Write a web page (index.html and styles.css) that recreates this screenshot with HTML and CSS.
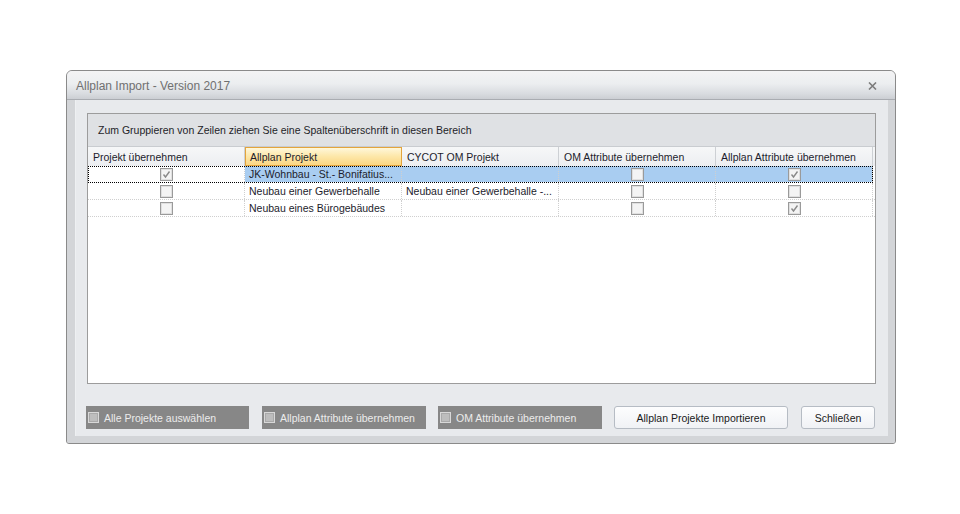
FILE: index.html
```html
<!DOCTYPE html>
<html>
<head>
<meta charset="utf-8">
<link rel="stylesheet" href="styles.css">
</head>
<body>
<div class="page">
  <div class="window">
    <div class="titlebar">
      <span class="title">Allplan Import - Version 2017</span>
      <svg class="close" width="9" height="8" viewBox="0 0 9 8"><path d="M1 0.5 L8 7.5 M8 0.5 L1 7.5" stroke="#7c7c7c" stroke-width="1.6" fill="none"/></svg>
    </div>
    <div class="frame">
      <div class="client">
        <div class="grid">
          <div class="grouppanel">Zum Gruppieren von Zeilen ziehen Sie eine Spaltenüberschrift in diesen Bereich</div>
          <div class="header">
            <div class="hcell">Projekt übernehmen</div>
            <div class="hcell hot">Allplan Projekt</div>
            <div class="hcell">CYCOT OM Projekt</div>
            <div class="hcell">OM Attribute übernehmen</div>
            <div class="hcell">Allplan Attribute übernehmen</div>
          </div>
          <div class="body">
            <div class="row selected">
              <div class="cell center focus"><span class="cb checked"><svg width="11" height="11" viewBox="0 0 11 11"><path d="M2.5 5.5 L4.5 8 L8.5 2.5" stroke="#8a8a8a" stroke-width="1.4" fill="none"/></svg></span></div>
              <div class="cell">JK-Wohnbau - St.- Bonifatius...</div>
              <div class="cell"></div>
              <div class="cell center"><span class="cb"></span></div>
              <div class="cell center"><span class="cb checked"><svg width="11" height="11" viewBox="0 0 11 11"><path d="M2.5 5.5 L4.5 8 L8.5 2.5" stroke="#8a8a8a" stroke-width="1.4" fill="none"/></svg></span></div>
            </div>
            <div class="row">
              <div class="cell center"><span class="cb"></span></div>
              <div class="cell">Neubau einer Gewerbehalle</div>
              <div class="cell">Neubau einer Gewerbehalle -...</div>
              <div class="cell center"><span class="cb"></span></div>
              <div class="cell center"><span class="cb"></span></div>
            </div>
            <div class="row">
              <div class="cell center"><span class="cb"></span></div>
              <div class="cell">Neubau eines Bürogebäudes</div>
              <div class="cell"></div>
              <div class="cell center"><span class="cb"></span></div>
              <div class="cell center"><span class="cb checked"><svg width="11" height="11" viewBox="0 0 11 11"><path d="M2.5 5.5 L4.5 8 L8.5 2.5" stroke="#8a8a8a" stroke-width="1.4" fill="none"/></svg></span></div>
            </div>
          </div>
        </div>
        <div class="bottombar">
          <div class="dark-check w1"><span class="scb"></span>Alle Projekte auswählen</div>
          <div class="dark-check w2"><span class="scb"></span>Allplan Attribute übernehmen</div>
          <div class="dark-check w2"><span class="scb"></span>OM Attribute übernehmen</div>
          <button class="btn w3">Allplan Projekte Importieren</button>
          <button class="btn w4">Schließen</button>
        </div>
      </div>
    </div>
  </div>
</div>
</body>
</html>
```
FILE: styles.css
```css
html, body {
  margin: 0;
  background: #ffffff;
  font-family: "Liberation Sans", Arial, sans-serif;
  font-size: 10.5px;
  color: #1c1c28;
}

.page {
  padding: 70px 0 0 66px;
}

.window {
  width: 830px;
  height: 374px;
  box-sizing: border-box;
  border: 1px solid #8a8a8a;
  border-radius: 6px 6px 3px 3px;
  background: #d6d8db;
  display: flex;
  flex-direction: column;
  overflow: hidden;
}

.titlebar {
  height: 28px;
  flex: none;
  display: flex;
  align-items: center;
  justify-content: space-between;
  padding: 0 18px 0 9px;
  background: linear-gradient(#f3f3f4 0%, #eceef0 45%, #d9dce0 80%, #cbced3 100%);
  border-bottom: 1px solid #a9acb1;
}

.title {
  font-size: 12px;
  color: #707070;
  padding-top: 1px;
}

.close {
  display: block;
  margin-top: 1px;
}

.frame {
  flex: 1;
  display: flex;
  padding: 0 7px 7px 8px;
  background: #d3d5d8;
}

.client {
  flex: 1;
  display: flex;
  flex-direction: column;
  background: #e8eaed;
  padding: 13px 12px 7px 12px;
  box-shadow: inset 1px 0 0 #eef0f2;
}

.grid {
  height: 271px;
  box-sizing: border-box;
  border: 1px solid #9c9c9c;
  background: #ffffff;
  display: flex;
  flex-direction: column;
}

.grouppanel {
  height: 32px;
  flex: none;
  display: flex;
  align-items: center;
  padding-left: 10px;
  background: #dfe1e4;
  color: #1e1e28;
}

.header {
  height: 19px;
  flex: none;
  display: grid;
  grid-template-columns: repeat(5, 157px);
  background: linear-gradient(#f6f7f8, #eceef1);
  border-top: 1px solid #c9ccd0;
}

.hcell {
  display: flex;
  align-items: center;
  padding-left: 5px;
  border-right: 1px solid #cdd0d4;
  white-space: nowrap;
  overflow: hidden;
  color: #1c1c2c;
}

.hcell.hot {
  border: 1px solid #e3a43c;
  padding-left: 4px;
  background: linear-gradient(#fff7da, #fde7a8 50%, #fbd684);
}

.body {
  flex: 1;
  background: #ffffff;
}

.row {
  display: grid;
  grid-template-columns: repeat(5, 157px);
  height: 17px;
  box-sizing: border-box;
  border-bottom: 1px dotted #cfcfcf;
}

.row.selected {
  outline: 1px dotted #000000;
  outline-offset: -1px;
  width: 785px;
}

.row.selected .cell {
  background: #a9cdf1;
}

.row.selected .cell.focus {
  background: #ffffff;
}

.cell {
  display: flex;
  align-items: center;
  padding-left: 4px;
  border-right: 1px dotted #cfcfcf;
  white-space: nowrap;
  overflow: hidden;
  color: #1c1c2c;
}

.cell.center {
  justify-content: center;
  padding-left: 0;
}

.cb {
  width: 13px;
  height: 13px;
  box-sizing: border-box;
  border: 1px solid #9a9a9a;
  box-shadow: inset 0 0 0 1px #e0e0e0;
  background: #f4f4f4;
  display: flex;
  align-items: center;
  justify-content: center;
}

.cb svg {
  display: block;
}

.bottombar {
  margin-top: 22px;
  margin-left: -1px;
  height: 23px;
  display: flex;
  gap: 12px;
}

.dark-check {
  height: 23px;
  box-sizing: border-box;
  background: #878787;
  color: #ececec;
  display: flex;
  align-items: center;
  padding-left: 2px;
}

.w1 { width: 163px; margin-right: 1px; }
.w2 { width: 164px; }
.w3 { width: 174px; margin-right: 1px; }
.w4 { width: 74px; }

.scb {
  width: 11px;
  height: 11px;
  box-sizing: border-box;
  border: 1px solid #d8d8d8;
  box-shadow: inset 0 0 0 1px #a9a9a9;
  background: #bdbdbd;
  margin-right: 5px;
}

.btn {
  height: 23px;
  box-sizing: border-box;
  border: 1px solid #b6bcc4;
  border-radius: 3px;
  background: linear-gradient(#fdfdfe, #f0f2f5);
  font-family: "Liberation Sans", Arial, sans-serif;
  font-size: 10.5px;
  color: #1a1a1a;
  padding: 0;
}
```
